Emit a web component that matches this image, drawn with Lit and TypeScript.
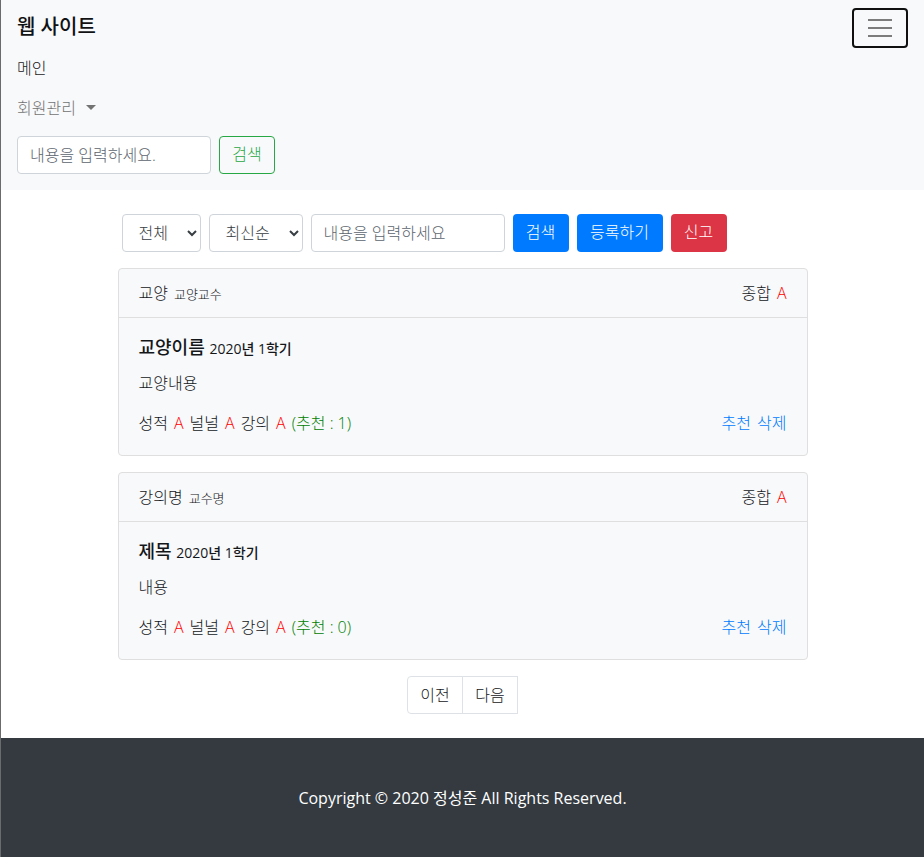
import { LitElement, html, css } from "lit";
import { customElement } from "lit/decorators.js";

interface Evaluation {
  lecture: string;
  professor: string;
  title: string;
  term: string;
  body: string;
  total: string;
  credit: string;
  comfort: string;
  teaching: string;
  likes: number;
}

const evaluations: Evaluation[] = [
  { lecture: "교양", professor: "교양교수", title: "교양이름", term: "2020년 1학기", body: "교양내용", total: "A", credit: "A", comfort: "A", teaching: "A", likes: 1 },
  { lecture: "강의명", professor: "교수명", title: "제목", term: "2020년 1학기", body: "내용", total: "A", credit: "A", comfort: "A", teaching: "A", likes: 0 },
];

@customElement("app-root")
export class AppRoot extends LitElement {
  static styles = css`
    :host {
      display: flex;
      flex-direction: column;
      min-height: 100vh;
      box-sizing: border-box;
      border-left: 1px solid #6b6b6e;
      background: #fff;
      color: #14171a;
      font: 300 16px/24px "Open Sans", "Noto Sans CJK KR", sans-serif;
    }
    *, *::before, *::after { box-sizing: border-box; }
    a { text-decoration: none; color: #007bff; }
    h5, p { margin: 0; }
    small { font-size: 13px; line-height: 16px; }

    .navbar { padding: 8px 16px; background: #f8f9fa; }
    .top { display: flex; justify-content: space-between; align-items: center; }
    .brand { padding-bottom: 2px; font-size: 20px; font-weight: 500; color: #101214; }
    .toggler {
      display: flex; align-items: center; justify-content: center;
      width: 56px; height: 40px; padding: 0;
      border: 2px solid #101010; border-radius: 4px; background: transparent;
    }
    .nav-link { display: block; padding: 8px 0; color: #1a1a1a; }
    .nav-link.muted { color: #737373; }
    .caret {
      display: inline-block; margin-left: 6px; vertical-align: 4px;
      border: 5px solid transparent; border-top-color: currentColor; border-bottom: 0;
    }
    .form { display: flex; flex-wrap: wrap; gap: 8px; }
    .nav-search { padding: 8px 0; }

    .control {
      height: 38px; padding: 6px 12px;
      border: 1px solid #ced4da; border-radius: 4px;
      background: #fff; color: #383e44; font: inherit;
    }
    .control::placeholder { color: #5c656d; opacity: 1; }
    input.control { width: 194px; }
    select.narrow { width: 79px; }
    select.wide { width: 94px; }
    .btn {
      height: 38px; min-width: 56px; padding: 0 12px 2px;
      border: 1px solid transparent; border-radius: 4px;
      background: transparent; color: #fff; font: inherit;
    }
    .outline { border-color: #28a745; color: #28a745; }
    .primary { background: #007bff; }
    .danger { background: #dc3545; }
    .long { min-width: 86px; }

    .container { width: 100%; max-width: 720px; margin: 0 auto; padding: 24px 15px; }
    .filters { padding: 0 4px; }
    .card { margin-top: 16px; border: 1px solid #dfdfdf; border-radius: 4px; background: #f8f9fa; }
    .row { display: flex; justify-content: space-between; }
    .words { display: flex; flex-wrap: wrap; align-items: baseline; gap: 0 6px; }
    .head { padding: 12px 20px; border-bottom: 1px solid #dfdfdf; }
    .body { padding: 20px; }
    .title { font-size: 18px; line-height: 18px; font-weight: 500; margin-bottom: 14px; }
    .title small { font-size: 14px; }
    .body p { margin-bottom: 16px; }
    .grade { color: red; }
    .likes { color: green; }
    .pager { display: flex; justify-content: center; margin-top: 16px; }
    .page { min-width: 56px; padding: 6px 12px; border: 1px solid #dee2e6; color: #14171a; text-align: center; }
    .page:first-child { border-radius: 4px 0 0 4px; }
    .page + .page { margin-left: -1px; }

    footer { flex: 1; padding: 48px 16px 47px; background: #343a40; color: #fff; font-weight: 400; text-align: center; }
  `;

  private card(e: Evaluation) {
    return html`
      <article class="card">
        <div class="row head">
          <div class="words"><span>${e.lecture}</span> <small>${e.professor}</small></div>
          <div class="words"><span>종합</span> <span class="grade">${e.total}</span></div>
        </div>
        <div class="body">
          <h5 class="title">${e.title} <small>${e.term}</small></h5>
          <p>${e.body}</p>
          <div class="row">
            <div class="words">
              <span>성적</span> <span class="grade">${e.credit}</span>
              <span>널널</span> <span class="grade">${e.comfort}</span>
              <span>강의</span> <span class="grade">${e.teaching}</span>
              <span class="likes">(추천 : ${e.likes})</span>
            </div>
            <div class="words"><a href="#">추천</a> <a href="#">삭제</a></div>
          </div>
        </div>
      </article>`;
  }

  render() {
    return html`
      <nav class="navbar">
        <div class="top">
          <a class="brand" href="#">웹 사이트</a>
          <button class="toggler" type="button" aria-label="메뉴">
            <svg width="30" height="30" viewBox="0 0 30 30" fill="none" stroke="rgba(0,0,0,0.5)" stroke-width="2" stroke-linecap="butt"><path d="M3 7h24M3 15h24M3 23h24" /></svg>
          </button>
        </div>
        <a class="nav-link" href="#">메인</a>
        <a class="nav-link muted" href="#">회원관리 <span class="caret"></span></a>
        <form class="form nav-search">
          <input class="control" type="search" placeholder="내용을 입력하세요." aria-label="사이트 검색" />
          <button class="btn outline" type="button">검색</button>
        </form>
      </nav>
      <main class="container">
        <form class="form filters">
          <select class="control narrow" aria-label="구분"><option>전체</option></select>
          <select class="control wide" aria-label="정렬"><option>최신순</option></select>
          <input class="control" type="text" placeholder="내용을 입력하세요" aria-label="강의 검색" />
          <button class="btn primary" type="button">검색</button>
          <button class="btn primary long" type="button">등록하기</button>
          <button class="btn danger" type="button">신고</button>
        </form>
        ${evaluations.map((e) => this.card(e))}
        <div class="pager">
          <a class="page" href="#">이전</a>
          <a class="page" href="#">다음</a>
        </div>
      </main>
      <footer>Copyright © 2020 정성준 All Rights Reserved.</footer>
    `;
  }
}
